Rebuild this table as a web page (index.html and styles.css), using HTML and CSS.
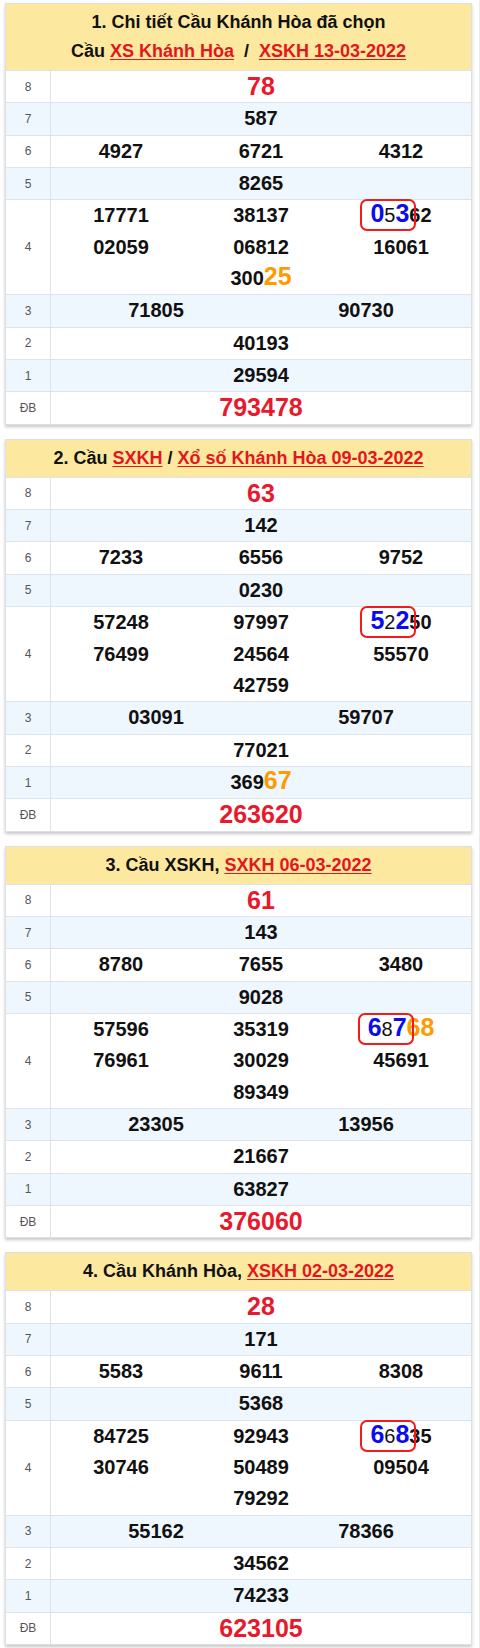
FILE: index.html
```html
<!DOCTYPE html>
<html lang="vi">
<head>
<meta charset="utf-8">
<title>Cầu Khánh Hòa</title>
<link rel="stylesheet" href="styles.css">
</head>
<body>
<div class="page">

  <section class="card">
    <div class="head">
      <div>1. Chi tiết Cầu Khánh Hòa đã chọn</div>
      <div>Cầu <a href="#">XS Khánh Hòa</a>&nbsp; / &nbsp;<a href="#">XSKH 13-03-2022</a></div>
    </div>
    <div class="row"><div class="lbl">8</div><div class="val big">78</div></div>
    <div class="row"><div class="lbl">7</div><div class="val">587</div></div>
    <div class="row"><div class="lbl">6</div><div class="val c3"><span>4927</span><span>6721</span><span>4312</span></div></div>
    <div class="row"><div class="lbl">5</div><div class="val">8265</div></div>
    <div class="row"><div class="lbl">4</div><div class="val c3">
      <span>17771</span><span>38137</span><span><span class="hl"><b class="bl">0</b><span class="mid">5</span><b class="bl">3</b></span>62</span>
      <span>02059</span><span>06812</span><span>16061</span>
      <span class="full">300<b class="or">25</b></span>
    </div></div>
    <div class="row"><div class="lbl">3</div><div class="val c2"><span>71805</span><span>90730</span></div></div>
    <div class="row"><div class="lbl">2</div><div class="val">40193</div></div>
    <div class="row"><div class="lbl">1</div><div class="val">29594</div></div>
    <div class="row"><div class="lbl">ĐB</div><div class="val big">793478</div></div>
  </section>

  <section class="card">
    <div class="head">
      <div>2. Cầu <a href="#">SXKH</a> / <a href="#">Xổ số Khánh Hòa 09-03-2022</a></div>
    </div>
    <div class="row"><div class="lbl">8</div><div class="val big">63</div></div>
    <div class="row"><div class="lbl">7</div><div class="val">142</div></div>
    <div class="row"><div class="lbl">6</div><div class="val c3"><span>7233</span><span>6556</span><span>9752</span></div></div>
    <div class="row"><div class="lbl">5</div><div class="val">0230</div></div>
    <div class="row"><div class="lbl">4</div><div class="val c3">
      <span>57248</span><span>97997</span><span><span class="hl"><b class="bl">5</b><span class="mid">2</span><b class="bl">2</b></span>50</span>
      <span>76499</span><span>24564</span><span>55570</span>
      <span class="full">42759</span>
    </div></div>
    <div class="row"><div class="lbl">3</div><div class="val c2"><span>03091</span><span>59707</span></div></div>
    <div class="row"><div class="lbl">2</div><div class="val">77021</div></div>
    <div class="row"><div class="lbl">1</div><div class="val">369<b class="or">67</b></div></div>
    <div class="row"><div class="lbl">ĐB</div><div class="val big">263620</div></div>
  </section>

  <section class="card">
    <div class="head">
      <div>3. Cầu XSKH, <a href="#">SXKH 06-03-2022</a></div>
    </div>
    <div class="row"><div class="lbl">8</div><div class="val big">61</div></div>
    <div class="row"><div class="lbl">7</div><div class="val">143</div></div>
    <div class="row"><div class="lbl">6</div><div class="val c3"><span>8780</span><span>7655</span><span>3480</span></div></div>
    <div class="row"><div class="lbl">5</div><div class="val">9028</div></div>
    <div class="row"><div class="lbl">4</div><div class="val c3">
      <span>57596</span><span>35319</span><span><span class="hl"><b class="bl">6</b><span class="mid">8</span><b class="bl">7</b></span><b class="or">68</b></span>
      <span>76961</span><span>30029</span><span>45691</span>
      <span class="full">89349</span>
    </div></div>
    <div class="row"><div class="lbl">3</div><div class="val c2"><span>23305</span><span>13956</span></div></div>
    <div class="row"><div class="lbl">2</div><div class="val">21667</div></div>
    <div class="row"><div class="lbl">1</div><div class="val">63827</div></div>
    <div class="row"><div class="lbl">ĐB</div><div class="val big">376060</div></div>
  </section>

  <section class="card">
    <div class="head">
      <div>4. Cầu Khánh Hòa, <a href="#">XSKH 02-03-2022</a></div>
    </div>
    <div class="row"><div class="lbl">8</div><div class="val big">28</div></div>
    <div class="row"><div class="lbl">7</div><div class="val">171</div></div>
    <div class="row"><div class="lbl">6</div><div class="val c3"><span>5583</span><span>9611</span><span>8308</span></div></div>
    <div class="row"><div class="lbl">5</div><div class="val">5368</div></div>
    <div class="row"><div class="lbl">4</div><div class="val c3">
      <span>84725</span><span>92943</span><span><span class="hl"><b class="bl">6</b><span class="mid">6</span><b class="bl">8</b></span>35</span>
      <span>30746</span><span>50489</span><span>09504</span>
      <span class="full">79292</span>
    </div></div>
    <div class="row"><div class="lbl">3</div><div class="val c2"><span>55162</span><span>78366</span></div></div>
    <div class="row"><div class="lbl">2</div><div class="val">34562</div></div>
    <div class="row"><div class="lbl">1</div><div class="val">74233</div></div>
    <div class="row"><div class="lbl">ĐB</div><div class="val big">623105</div></div>
  </section>

</div>
</body>
</html>
```

FILE: styles.css
```css
html, body {
  margin: 0;
  padding: 0;
  background: #ffffff;
}

body {
  font-family: "Liberation Sans", Arial, sans-serif;
  color: #111;
}

.page {
  padding: 3px 7px 4px 5px;
  display: flex;
  flex-direction: column;
  gap: 14px;
  border-left: 1px solid #ececec;
  border-right: 1px solid #ececec;
  margin-left: -1px;
}

.card {
  background: #fff;
  border: 1px solid #dcdfe3;
  box-shadow: 0 2px 3px rgba(0, 0, 0, 0.22);
}

.head {
  background: #fde89f;
  text-align: center;
  font-weight: bold;
  font-size: 18px;
  line-height: 29px;
  padding: 4px 0;
  color: #111;
}

.head a {
  color: #e3161e;
  text-decoration: underline;
  text-decoration-thickness: 1px;
  text-underline-offset: 2px;
}

.row {
  display: grid;
  grid-template-columns: 45px 1fr;
  border-top: 1px solid #dde4ec;
  background: #fff;
}

.row:nth-child(odd) {
  background: #eef6fe;
}

.lbl {
  display: flex;
  align-items: center;
  justify-content: center;
  font-size: 12px;
  color: #555;
  border-right: 1px solid #dde3ea;
}

.val {
  text-align: center;
  font-weight: bold;
  font-size: 20px;
  line-height: 31.35px;
  color: #111;
}

.val.big {
  font-size: 25px;
  color: #e8192c;
}

.c3 {
  display: grid;
  grid-template-columns: repeat(3, 1fr);
}

.c2 {
  display: grid;
  grid-template-columns: repeat(2, 1fr);
}

.full {
  grid-column: 1 / -1;
}

.or {
  color: #ff9a00;
  font-size: 25px;
  line-height: 1;
}

.bl {
  color: #0b0bf0;
  font-size: 25px;
  line-height: 1;
}

.mid {
  font-weight: normal;
  color: #111;
}

.hl {
  position: relative;
  line-height: 1;
}

.hl::after {
  content: "";
  position: absolute;
  left: -10px;
  right: -7px;
  top: -5px;
  bottom: -5px;
  border: 2px solid #f21a1a;
  border-radius: 7px;
}
```
